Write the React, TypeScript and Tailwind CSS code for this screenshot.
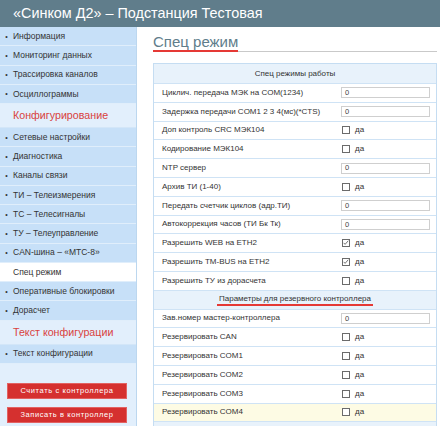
// Controller web UI — "Спец режим" settings page
const font = { fontFamily: "'Liberation Sans', Arial, sans-serif" };

type MenuEntry =
  | { kind: 'item'; label: string; active?: boolean }
  | { kind: 'heading'; label: string };

const menu: MenuEntry[] = [
  { kind: 'item', label: 'Информация' },
  { kind: 'item', label: 'Мониторинг данных' },
  { kind: 'item', label: 'Трассировка каналов' },
  { kind: 'item', label: 'Осциллограммы' },
  { kind: 'heading', label: 'Конфигурирование' },
  { kind: 'item', label: 'Сетевые настройки' },
  { kind: 'item', label: 'Диагностика' },
  { kind: 'item', label: 'Каналы связи' },
  { kind: 'item', label: 'ТИ – Телеизмерения' },
  { kind: 'item', label: 'ТС – Телесигналы' },
  { kind: 'item', label: 'ТУ – Телеуправление' },
  { kind: 'item', label: 'CAN-шина – «МТС-8»' },
  { kind: 'item', label: 'Спец режим', active: true },
  { kind: 'item', label: 'Оперативные блокировки' },
  { kind: 'item', label: 'Дорасчет' },
  { kind: 'heading', label: 'Текст конфигурации' },
  { kind: 'item', label: 'Текст конфигурации' },
];

type Row =
  | { kind: 'section'; label: string; underline?: boolean }
  | { kind: 'input'; label: string; value: string }
  | { kind: 'check'; label: string; checked?: boolean; highlight?: boolean };

const rows: Row[] = [
  { kind: 'input', label: 'Циклич. передача МЭК на COM(1234)', value: '0' },
  { kind: 'input', label: 'Задержка передачи COM1 2 3 4(мс)(*CTS)', value: '0' },
  { kind: 'check', label: 'Доп контроль CRC МЭК104' },
  { kind: 'check', label: 'Кодирование МЭК104' },
  { kind: 'input', label: 'NTP сервер', value: '0' },
  { kind: 'check', label: 'Архив ТИ (1-40)' },
  { kind: 'input', label: 'Передать счетчик циклов (адр.ТИ)', value: '0' },
  { kind: 'input', label: 'Автокоррекция часов (ТИ Бк Тк)', value: '0' },
  { kind: 'check', label: 'Разрешить WEB на ETH2', checked: true },
  { kind: 'check', label: 'Разрешить TM-BUS на ETH2', checked: true },
  { kind: 'check', label: 'Разрешить ТУ из дорасчета' },
  { kind: 'section', label: 'Параметры для резервного контроллера', underline: true },
  { kind: 'input', label: 'Зав.номер мастер-контроллера', value: '0' },
  { kind: 'check', label: 'Резервировать CAN' },
  { kind: 'check', label: 'Резервировать COM1' },
  { kind: 'check', label: 'Резервировать COM2' },
  { kind: 'check', label: 'Резервировать COM3' },
  { kind: 'check', label: 'Резервировать COM4', highlight: true },
];

function Checkbox({ checked }: { checked?: boolean }) {
  return (
    <span className="relative inline-block w-[8px] h-[8px] border border-[#6b6b6b] bg-white">
      {checked && (
        <svg viewBox="0 0 8 8" className="absolute inset-0 w-[6px] h-[6px]">
          <path d="M0.8 3.8 L2.8 5.8 L7 1" fill="none" stroke="#555" strokeWidth="1.1" />
        </svg>
      )}
    </span>
  );
}

function Sidebar() {
  return (
    <aside className="w-[137px] shrink-0 flex flex-col bg-[#e2effc] border-r border-[#bcd7ef]">
      {menu.map((m, i) =>
        m.kind === 'heading' ? (
          <div
            key={i}
            className="h-[24px] flex items-center pl-[13px] bg-[#e2effc] border-b border-[#d3e6f8] text-[10.7px] text-[#d9423e]"
          >
            {m.label}
          </div>
        ) : (
          <div
            key={i}
            className={`h-[19.25px] flex items-center text-[8.5px] border-b border-[#e0eefb] ${
              m.active ? 'bg-white text-[#333] pl-[13px]' : 'bg-[#c7e0f8] text-[#333]'
            }`}
          >
            {!m.active && <span className="w-[13px] text-center text-[7px] leading-none">•</span>}
            {m.label}
          </div>
        )
      )}
      <div className="flex flex-col gap-[8px] pl-[7px] pt-[19px]">
        <button className="w-[120px] h-[16px] bg-[#d5302f] text-white text-[7.5px] tracking-[0.6px] border border-[#e26262]">
          Считать с контроллера
        </button>
        <button className="w-[120px] h-[16px] bg-[#d5302f] text-white text-[7.5px] tracking-[0.6px] border border-[#e26262]">
          Записать в контроллер
        </button>
      </div>
    </aside>
  );
}

function SettingsRow({ row }: { row: Row }) {
  if (row.kind === 'section') {
    return (
      <div className="h-[18.8px] flex items-center justify-center bg-[#e8f2fb] border-b border-[#cfe3f5] text-[8px] text-[#333]">
        <span className={row.underline ? 'border-b-2 border-[#e53935] leading-[10px] px-[2px]' : ''}>{row.label}</span>
      </div>
    );
  }
  return (
    <div
      className={`h-[18.8px] flex items-center border-b border-[#cfe3f5] text-[8px] text-[#333] ${
        row.kind === 'check' && row.highlight ? 'bg-[#fdfbe4]' : 'bg-white'
      }`}
    >
      <div className="w-[187px] pl-[8px] shrink-0">{row.label}</div>
      {row.kind === 'input' ? (
        <div className="w-[89px] h-[11px] border border-[#cfcfcf] bg-white pl-[3px] flex items-center text-[7.5px] text-[#444]">
          {row.value}
        </div>
      ) : (
        <div className="flex items-center gap-[5px] pl-[1px]">
          <Checkbox checked={row.checked} />
          <span className="text-[8px]">да</span>
        </div>
      )}
    </div>
  );
}

export default function App() {
  return (
    <div className="w-[440px] h-[426px] overflow-hidden bg-white flex flex-col" style={font}>
      <header className="h-[27px] shrink-0 bg-[#607d8b] flex items-center pl-[13px] text-white text-[14.4px]">
        «Синком Д2» – Подстанция Тестовая
      </header>
      <div className="flex flex-1 overflow-hidden">
        <Sidebar />
        <main className="flex-1 pl-[16px] pr-[3px] pt-[8px] overflow-hidden">
          <div className="border-b border-[#c9c9c9] h-[17px] flex items-end">
            <span className="text-[15px] leading-[17px] text-[#607d8b] border-b-2 border-[#e53935] -mb-[1px]">Спец режим</span>
          </div>
          <div className="mt-[11px] border-x border-t border-[#c5ddf2]">
            <div className="h-[20px] flex items-center justify-center bg-[#e8f2fb] border-b border-[#cfe3f5] text-[8px] text-[#333]">
              Спец режимы работы
            </div>
            {rows.map((r, i) => (
              <SettingsRow key={i} row={r} />
            ))}
            <div className="h-[18.8px] bg-[#e8f2fb]" />
          </div>
        </main>
      </div>
    </div>
  );
}
